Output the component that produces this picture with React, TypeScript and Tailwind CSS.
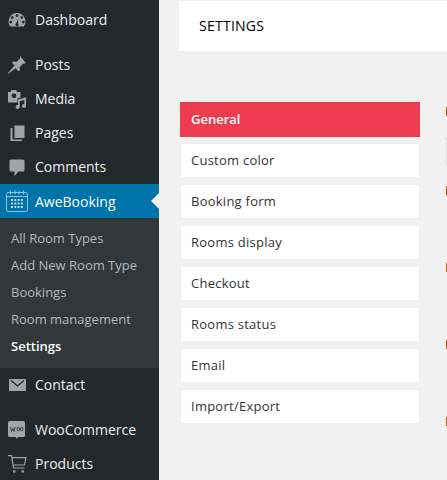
const Dash = () => (
  <svg viewBox="0 0 20 20" className="w-5 h-5"><path fill="#a0a5aa" fillRule="evenodd" d="M10 3a8.500 8.500 0 0 0-8.500 8.500c0 2 .7 3.700 1.900 5h13.200c1.200-1.300 1.900-3 1.900-5A8.500 8.500 0 0 0 10 3zM10 4.300a1.400 1.400 0 1 1 0 2.800 1.400 1.400 0 0 1 0-2.800zM5.200 6.200a1.400 1.400 0 1 1 0 2.800 1.400 1.400 0 0 1 0-2.800zM14.800 6.200a1.400 1.400 0 1 1 0 2.800 1.400 1.400 0 0 1 0-2.800zM3.700 10.700a1.400 1.400 0 1 1 0 2.800 1.400 1.400 0 0 1 0-2.800zM16.300 10.700a1.400 1.400 0 1 1 0 2.800 1.400 1.400 0 0 1 0-2.800zM11.400 8.500l-.5 4.700a1.600 1.600 0 1 1-1.800 0z" /></svg>
);
const Pin = () => (
  <svg viewBox="0 0 20 20" className="w-5 h-5"><path fill="#a0a5aa" d="M13 1l6 7.200-3 .5-3.500 3.500.6 3-1.700 1-2.800-3L1 19l.3-1.200 6.300-7.200-2.600-2.800 1.500-1.500 3 .7 3.500-3.500z" /></svg>
);
const Media = () => (
  <svg viewBox="0 0 20 20" className="w-5 h-5"><path fill="#a0a5aa" fillRule="evenodd" d="M4.500 1h4.500l1 2h3.500v5.500l-3 .9v4.100H1V3h2.500zM7 4.400a2.400 2.400 0 1 0 0 4.800 2.400 2.400 0 0 0 0-4.800z" /><path fill="#a0a5aa" d="M11 10.500l8-2.300v8.800a2 2 0 1 1-1.700-2V11l-4.600 1.300v5.700a2 2 0 1 1-1.700-2z" /></svg>
);
const Pages = () => (
  <svg viewBox="0 0 20 20" className="w-5 h-5"><path fill="#a0a5aa" d="M7.500 2.500H17.500v12.500H7.500z" /><path fill="#a0a5aa" d="M5.500 5v11.500h9.500v1.500H3.500V5z" /></svg>
);
const Comment = () => (
  <svg viewBox="0 0 20 20" className="w-5 h-5"><path fill="#a0a5aa" d="M4 2.500h12a1.500 1.500 0 0 1 1.500 1.500v9a1.500 1.500 0 0 1-1.500 1.500h-4.500L7.500 19v-4.500H4A1.500 1.500 0 0 1 2.500 13V4A1.500 1.500 0 0 1 4 2.500z" /></svg>
);
const Calendar = () => (
  <svg viewBox="0 0 22 22" className="w-[22px] h-[22px]" fill="none" stroke="#b9d4e4" strokeWidth="0.800">
    <rect x="0.500" y="2.500" width="21" height="19" rx="2" />
    <path d="M0.500 6.500h21M4.500 0.500v4M9 0.500v4M13 0.500v4M17.500 0.500v4" />
    <path strokeWidth="1.800" strokeDasharray="2 1.300" d="M5 10h12M5 13.500h12M5 17h12" />
  </svg>
);
const Mail = () => (
  <svg viewBox="0 0 20 20" className="w-5 h-5"><path fill="#a0a5aa" d="M2 4h17v12H2z" /><path fill="none" stroke="#23282d" strokeWidth="1.300" d="M4 5.500l6.500 5.500 6.500-5.500" /></svg>
);
const Woo = () => (
  <svg viewBox="0 0 20 20" className="w-5 h-5">
    <path fill="#a0a5aa" d="M2.500 1h14a1.500 1.500 0 0 1 1.500 1.500v13a1.500 1.500 0 0 1-1.500 1.500h-5l-2 2-.5-2h-6.500A1.500 1.500 0 0 1 1 15.500v-13A1.500 1.500 0 0 1 2.500 1z" />
    <path fill="none" stroke="#23282d" strokeWidth="0.800" d="M3.500 7l1 4.500 1.300-3 1.300 3 .9-4.500M10 9a1.300 1.700 0 1 0 2.600 0 1.300 1.700 0 1 0-2.600 0M13.400 9a1.300 1.700 0 1 0 2.600 0 1.300 1.700 0 1 0-2.600 0" />
  </svg>
);
const Cart = () => (
  <svg viewBox="0 0 20 20" className="w-5 h-5" fill="none" stroke="#a0a5aa" strokeWidth="1.200">
    <path d="M1 1.600h3.500l2 12.400h11M5 3.600h14l-1.500 7.400H6" />
    <path strokeWidth="2" d="M6 17.500h2.500M14.500 17.500h2.500" />
  </svg>
);

const Row = ({ icon, label, mb }: { icon: React.ReactNode; label: string; mb?: boolean }) => (
  <div className={`flex items-center h-[34px] text-[14px] text-[#eeeeee] ${mb ? "mb-[11px]" : ""}`}>
    <span className="w-[35px] pl-[7px] flex items-center">{icon}</span>
    <span className="pb-[2px]">{label}</span>
  </div>
);

const subs = ["All Room Types", "Add New Room Type", "Bookings", "Room management"];
const tabs = ["Custom color", "Booking form", "Rooms display", "Checkout", "Rooms status", "Email", "Import/Export"];
const marks = [0, 1, 2, 3, 4];

export default function App() {
  return (
    <div className="flex w-[447px] h-[480px] overflow-hidden bg-[#f1f1f1] font-['Open_Sans',sans-serif]">
      <aside className="w-[159px] shrink-0 bg-[#23282d] pt-[3px]">
        <Row icon={<Dash />} label="Dashboard" mb />
        <Row icon={<Pin />} label="Posts" />
        <Row icon={<Media />} label="Media" />
        <Row icon={<Pages />} label="Pages" />
        <Row icon={<Comment />} label="Comments" />
        <div className="relative flex items-center h-[34px] bg-[#0073aa] text-[14px] text-white">
          <span className="w-[35px] pl-[6px] flex items-center"><Calendar /></span>
          <span>AweBooking</span>
          <span className="absolute right-0 top-[9px] border-y-[8px] border-r-[8px] border-y-transparent border-r-[#f1f1f1]" />
        </div>
        <div className="bg-[#32373c] pt-[7px] pb-[8px] text-[13px] text-[#b4b9be]">
          {subs.map((s) => (
            <div key={s} className="h-[27px] pl-[11px] flex items-center">{s}</div>
          ))}
          <div className="h-[27px] pl-[11px] flex items-center font-semibold text-white">Settings</div>
        </div>
        <Row icon={<Mail />} label="Contact" mb />
        <Row icon={<Woo />} label="WooCommerce" />
        <Row icon={<Cart />} label="Products" />
      </aside>
      <main className="flex-1 min-w-0 pt-px">
        <div className="ml-[20px] h-[50px] bg-white flex items-center pl-[20px] pb-[2px] text-[14px] text-black font-medium tracking-[0.25px]">
          SETTINGS
        </div>
        <div className="flex mt-[51px] ml-[21px]">
          <div className="w-[240px] flex flex-col">
            <div className="h-[35px] bg-[#ed3c50] text-white text-[13px] font-semibold flex items-center pl-[11px] mb-[6px]">General</div>
            {tabs.map((t) => (
              <div key={t} className="h-[35px] mb-[6px] bg-white border border-[#efefef] text-[#333333] text-[13px] font-medium tracking-[0.25px] flex items-center pl-[10px]">
                {t}
              </div>
            ))}
          </div>
          <div className="ml-[26px] w-[1px] flex flex-col pt-[5px]">
            <div className="h-[9px] bg-[#b5651d] shrink-0" />
            <div className="h-[28px] bg-[#dddddd] mt-[21px] shrink-0" />
            {marks.slice(1).map((m) => (
              <div key={m} className={`h-[9px] bg-[#b5651d] shrink-0 ${m === 1 ? "mt-[21px]" : "mt-[68px]"}`} />
            ))}
          </div>
        </div>
      </main>
    </div>
  );
}
